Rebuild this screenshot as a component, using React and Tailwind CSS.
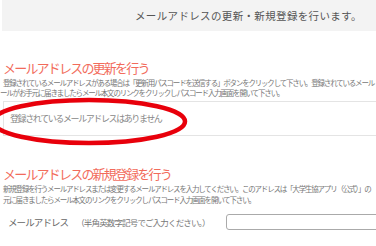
import React from 'react';

const jp = { fontFamily: '"Noto Sans CJK JP", "Noto Sans", sans-serif' };

export default function App() {
  return (
    <div className="relative w-[376px] h-[246px] overflow-hidden bg-white text-[#777]" style={jp}>
      <div className="ml-[2px] h-[31px] bg-[#f3f3f3] flex items-center pl-[133px] whitespace-nowrap">
        <span className="text-[10.5px] text-[#555] tracking-[0.35px]">メールアドレスの更新・新規登録を行います。</span>
      </div>

      <h2 className="mt-[29px] ml-[3px] h-[16px] leading-[16px] text-[13px] tracking-[-1.8px] text-[#f26b5b] whitespace-nowrap">
        メールアドレスの更新を行う
      </h2>
      <div className="mt-[2px] text-[7.5px] leading-[10px] tracking-[-1.2px] whitespace-nowrap">
        <p className="ml-[3px]">登録されているメールアドレスがある場合は「更新用パスコードを送信する」ボタンをクリックして下さい。登録されているメール</p>
        <p>ールがお手元に届きましたらメール本文のリンクをクリックしパスコード入力画面を開いて下さい。</p>
      </div>

      <div className="mt-[3px] ml-[3px] h-[35px] border border-r-0 border-[#e4e4e4] flex items-center pl-[6px] whitespace-nowrap">
        <span className="text-[9px] tracking-[-1.4px] text-[#888]">登録されているメールアドレスはありません</span>
      </div>

      <h2 className="mt-[30px] ml-[3px] h-[16px] leading-[16px] text-[13px] tracking-[-1.8px] text-[#f26b5b] whitespace-nowrap">
        メールアドレスの新規登録を行う
      </h2>
      <div className="mt-[2px] ml-[3px] text-[7.5px] leading-[10.5px] tracking-[-1.2px] whitespace-nowrap">
        <p>新規登録を行うメールアドレスまたは変更するメールアドレスを入力してください。このアドレスは「大学生協アプリ（公式）」の</p>
        <p>元に届きましたらメール本文のリンクをクリックしパスコード入力画面を開いて下さい。</p>
      </div>

      <div className="mt-[9px] flex items-center whitespace-nowrap">
        <span className="ml-[8px] text-[9.5px] tracking-[-0.9px] text-[#666]">メールアドレス</span>
        <span className="ml-[8px] text-[8.5px] tracking-[-0.85px] text-[#777]">（半角英数字記号でご入力ください。）</span>
        <div className="ml-auto -mr-[20px] w-[170px] h-[16px] border-[1.5px] border-[#aaa] rounded-[3px] bg-white" />
      </div>

      <svg className="absolute left-0 top-0" width="376" height="246" viewBox="0 0 376 246">
        <ellipse cx="89" cy="121.5" rx="96" ry="21.5" fill="none" stroke="#e8000b" strokeWidth="4.5" />
      </svg>
    </div>
  );
}
